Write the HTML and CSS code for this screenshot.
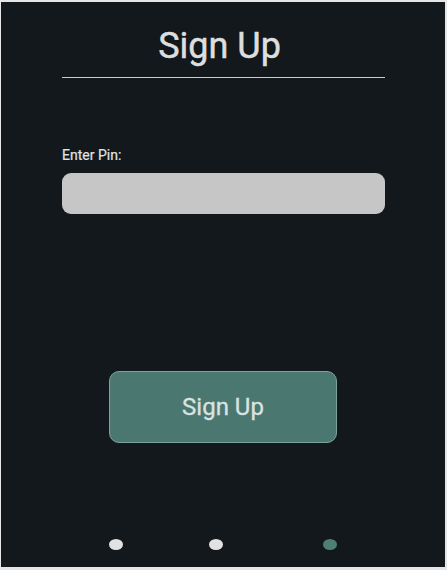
FILE: index.html
```html
<!DOCTYPE html>
<html>
<head>
<meta charset="utf-8">
<link rel="stylesheet" href="styles.css">
</head>
<body>
<div class="panel">
  <h1 class="title">Sign Up</h1>
  <div class="rule"></div>
  <label class="label">Enter Pin:</label>
  <div class="input"></div>
  <button class="btn">Sign Up</button>
  <div class="dots">
    <span class="dot"></span>
    <span class="dot dot-2"></span>
    <span class="dot dot-3 active"></span>
  </div>
</div>
</body>
</html>
```

FILE: styles.css
```css
html, body {
  margin: 0;
  padding: 0;
  background: #e6e6e6;
}
body {
  font-family: Roboto, "Liberation Sans", sans-serif;
}
.panel {
  box-sizing: border-box;
  width: 444px;
  height: 565px;
  margin: 2px 0 0 1px;
  background: #12181b;
  display: flex;
  flex-direction: column;
  padding: 23px 0 0 61px;
}
.title {
  margin: 0;
  width: 315px;
  text-align: center;
  font-size: 36px;
  line-height: 42px;
  font-weight: 400;
  color: #dedede;
  -webkit-text-stroke: 0.5px #dedede;
}
.rule {
  margin-top: 10px;
  width: 323px;
  height: 1px;
  background: #c8cccc;
}
.label {
  margin-top: 70px;
  font-size: 14px;
  line-height: 15px;
  font-weight: 400;
  color: #e2e2e2;
  -webkit-text-stroke: 0.2px #e2e2e2;
}
.input {
  margin-top: 10px;
  width: 323px;
  height: 41px;
  border-radius: 9px;
  background: #c6c6c6;
}
.btn {
  margin: 157px 0 0 47px;
  width: 228px;
  height: 72px;
  box-sizing: border-box;
  border: 1px solid #7ea39c;
  border-radius: 10px;
  background: #4a7871;
  color: #dbe3e1;
  font-family: Roboto, "Liberation Sans", sans-serif;
  font-size: 24px;
  -webkit-text-stroke: 0.3px #dbe3e1;
  padding: 0;
}
.dots {
  display: flex;
  margin: 96px 0 0 47px;
}
.dot {
  width: 14px;
  height: 11px;
  border-radius: 50%;
  background: #e2e2e2;
}
.dot-2 { margin-left: 86px; }
.dot-3 { margin-left: 100px; }
.dot.active { background: #4d7f75; }
```
